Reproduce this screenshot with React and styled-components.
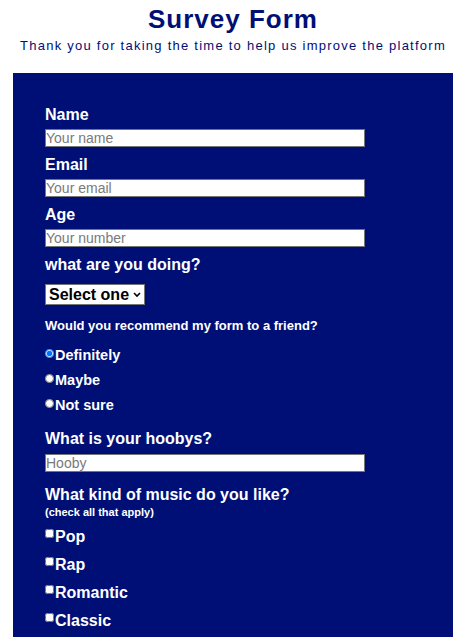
import React from 'react'
import styled, { createGlobalStyle } from 'styled-components'

const GlobalStyle = createGlobalStyle`
  body {
    margin: 0;
    background: #fff;
    font-family: "Liberation Sans", Arial, sans-serif;
  }
`

const Header = styled.header`
  text-align: center;
  color: #000f75;
  padding-top: 4px;
`

const Title = styled.h1`
  margin: 0;
  font-size: 26px;
  line-height: 30px;
  letter-spacing: 1px;
`

const Subtitle = styled.p`
  margin: 4px 0 0;
  font-size: 13px;
  line-height: 16px;
  letter-spacing: 1.25px;
`

const Panel = styled.form`
  width: 440px;
  margin: 19px auto 0;
  background: #000f75;
  color: #fff;
  padding: 32px 32px 40px;
  box-sizing: border-box;
  font-weight: bold;
`

const Label = styled.label`
  display: block;
  font-size: ${p => p.size || 16}px;
  line-height: ${p => p.lh || 20}px;
  margin-top: ${p => p.top || 0}px;
`

const Small = styled.div`
  margin-top: 1px;
  font-size: 11px;
  line-height: 12px;
`

const TextInput = styled.input`
  display: block;
  width: 320px;
  height: 18px;
  box-sizing: border-box;
  margin: ${p => p.top || 4}px 0 0;
  padding: 0;
  border: 1px solid #767676;
  font-family: "Liberation Sans", Arial, sans-serif;
  font-size: 14px;
  &::placeholder {
    color: #7a7a7a;
  }
`

const SelectWrap = styled.div`
  position: relative;
  width: 100px;
  margin-top: 9px;
`

const Select = styled.select`
  display: block;
  appearance: none;
  width: 100px;
  height: 21px;
  font-family: "Liberation Sans", Arial, sans-serif;
  font-size: 16px;
  font-weight: bold;
  color: #000;
  border: 1px solid #767676;
  border-radius: 0;
  background: #fff;
  padding: 0 0 0 3px;
`

const Chevron = styled.svg`
  position: absolute;
  right: 4px;
  top: 8px;
  pointer-events: none;
`

const Option = styled.div`
  display: flex;
  align-items: flex-start;
  margin-top: ${p => p.gap}px;
  font-size: ${p => p.size}px;
  line-height: ${p => p.lh}px;
`

const Mark = styled.input`
  width: 9px;
  height: 9px;
  margin: 2px 1px 0 0;
`

const radios = ['Definitely', 'Maybe', 'Not sure']
const music = ['Pop', 'Rap', 'Romantic', 'Classic']

export default function App() {
  return (
    <>
      <GlobalStyle />
      <Header>
        <Title>Survey Form</Title>
        <Subtitle>Thank you for taking the time to help us improve the platform</Subtitle>
      </Header>
      <Panel onSubmit={e => e.preventDefault()}>
        <Label>Name</Label>
        <TextInput type='text' placeholder='Your name' />
        <Label top={8}>Email</Label>
        <TextInput type='email' placeholder='Your email' />
        <Label top={8}>Age</Label>
        <TextInput type='number' placeholder='Your number' />
        <Label top={8}>what are you doing?</Label>
        <SelectWrap>
          <Select defaultValue=''>
            <option value=''>Select one</option>
            <option>Working</option>
            <option>Studying</option>
          </Select>
          <Chevron width='8' height='6' viewBox='0 0 8 6'>
            <path d='M1 1l3 3 3-3' fill='none' stroke='#000' strokeWidth='1.6' />
          </Chevron>
        </SelectWrap>
        <Label size={13} lh={16} top={13}>Would you recommend my form to a friend?</Label>
        {radios.map((r, i) => (
          <Option key={r} gap={i === 0 ? 13 : 8} size={14.5} lh={17}>
            <Mark type='radio' name='rec' defaultChecked={i === 0} />
            {r}
          </Option>
        ))}
        <Label top={15}>What is your hoobys?</Label>
        <TextInput type='text' placeholder='Hooby' top={5} />
        <Label top={13}>What kind of music do you like?</Label>
        <Small>(check all that apply)</Small>
        {music.map((m, i) => (
          <Option key={m} gap={i === 0 ? 9 : 8} size={16} lh={20}>
            <Mark type='checkbox' />
            {m}
          </Option>
        ))}
      </Panel>
    </>
  )
}
